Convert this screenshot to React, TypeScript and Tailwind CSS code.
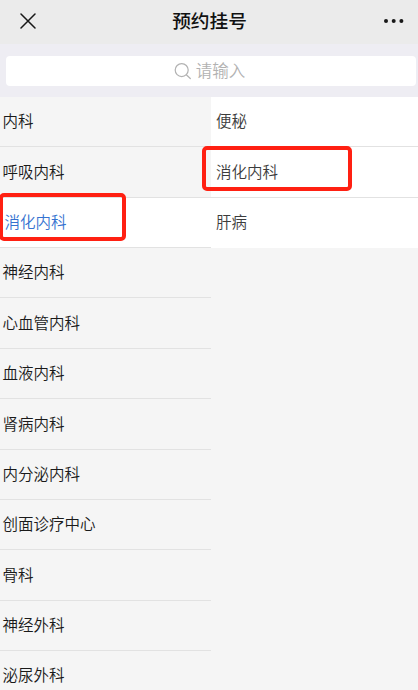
import React, { useState } from 'react';

const DEPARTMENTS = [
    '内科',
    '呼吸内科',
    '消化内科',
    '神经内科',
    '心血管内科',
    '血液内科',
    '肾病内科',
    '内分泌内科',
    '创面诊疗中心',
    '骨科',
    '神经外科',
    '泌尿外科',
];

const CLINICS = ['便秘', '消化内科', '肝病'];

const Header: React.FC = () => (
    <header className="flex h-11 shrink-0 items-center justify-between bg-[#ebebeb] pl-5 pr-[14px] pb-[3px]">
        <button className="w-[15px]" aria-label="关闭">
            <svg width="16" height="16" viewBox="0 0 16 16" fill="none" stroke="#181818" strokeWidth="1.5" strokeLinecap="round">
                <path d="M1 1l14 14M15 1L1 15" />
            </svg>
        </button>
        <h1 className="pb-0.5 text-[18.7px] leading-7 font-medium text-[#111]">预约挂号</h1>
        <button className="w-5" aria-label="更多">
            <svg width="20" height="4" viewBox="0 0 20 4" fill="#181818">
                <circle cx="2" cy="2" r="2" />
                <circle cx="9.7" cy="2" r="2" />
                <circle cx="17.4" cy="2" r="2" />
            </svg>
        </button>
    </header>
);

const SearchBar: React.FC = () => (
    <div className="h-[53px] shrink-0 bg-[#eeedf3] pt-3 pl-1.5 pr-0.5">
        <div className="flex h-[30px] items-center justify-center gap-[5px] rounded bg-white pr-[3px] text-[#b2b2b2]">
            <svg width="17" height="17" viewBox="0 0 17 17" fill="none" stroke="currentColor" strokeWidth="1.2" strokeLinecap="round">
                <circle cx="7.7" cy="7.1" r="6.5" />
                <path d="M12.3 11.8l4 3.7" />
            </svg>
            <span className="pb-0.5 text-[16.5px] leading-6 font-[350]">请输入</span>
        </div>
    </div>
);

export default function App() {
    const [active, setActive] = useState(2);

    return (
        <div className="flex h-[690px] w-[418px] flex-col overflow-hidden bg-[#f5f5f5] font-['Noto_Sans_CJK_SC',sans-serif] select-none">
            <Header />
            <SearchBar />

            <main className="flex min-h-0 flex-1">
                {/* Departments */}
                <ul className="w-[211px] shrink-0">
                    {DEPARTMENTS.map((name, i) => (
                        <li
                            key={name}
                            onClick={() => setActive(i)}
                            className={`relative flex h-[50.36px] items-center border-b border-[#e2e2e2] pb-[1.4px] text-[15.5px] font-[350] ${
                                i === active ? 'bg-white pl-[4.5px] text-[#3572d0]' : 'pl-[2.5px] text-[#1a1a1a]'
                            }`}
                        >
                            {name}
                            {i === active && (
                                <span className="absolute -top-[5px] -left-px h-[48.5px] w-[126.5px] rounded-[5px] border-4 border-[#ff2012]" />
                            )}
                        </li>
                    ))}
                </ul>

                {/* Clinics of the selected department */}
                <ul className="flex-1">
                    {CLINICS.map((name, i) => (
                        <li
                            key={name}
                            className="relative flex h-[50.36px] items-center border-b border-[#e2e2e2] bg-white pb-[1.4px] pl-[5px] text-[15.5px] font-[350] text-[#3c3c3c] last:border-transparent"
                        >
                            {name}
                            {i === 1 && (
                                <span className="absolute -top-[1px] -left-[8.6px] h-[44.5px] w-[149.5px] rounded-[5px] border-4 border-[#ff2012]" />
                            )}
                        </li>
                    ))}
                </ul>
            </main>
        </div>
    );
}
